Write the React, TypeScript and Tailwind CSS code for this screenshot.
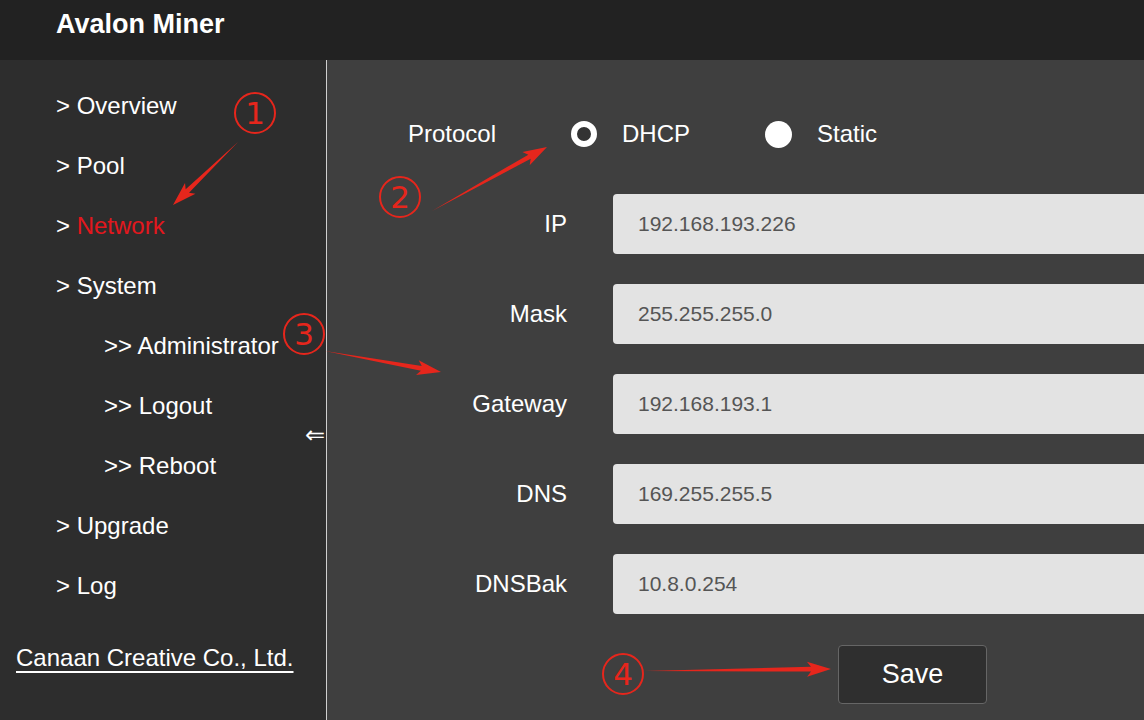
import React from 'react';

const font = { fontFamily: '"Liberation Sans", Arial, sans-serif' };

const navItems = [
  { label: '> Overview', sub: false },
  { label: '> Pool', sub: false },
  { label: 'Network', sub: false, active: true },
  { label: '> System', sub: false },
  { label: '>> Administrator', sub: true },
  { label: '>> Logout', sub: true },
  { label: '>> Reboot', sub: true },
  { label: '> Upgrade', sub: false },
  { label: '> Log', sub: false },
];

const fields = [
  { label: 'IP', value: '192.168.193.226' },
  { label: 'Mask', value: '255.255.255.0' },
  { label: 'Gateway', value: '192.168.193.1' },
  { label: 'DNS', value: '169.255.255.5' },
  { label: 'DNSBak', value: '10.8.0.254' },
];

const RED = '#e6261c';

// tapered red arrow, thin at the tail and wide at the head
function arrowPoints(x1: number, y1: number, x2: number, y2: number) {
  const dx = x2 - x1;
  const dy = y2 - y1;
  const len = Math.sqrt(dx * dx + dy * dy);
  const ux = dx / len;
  const uy = dy / len;
  const nx = -uy;
  const ny = ux;
  const headLen = 20;
  const headW = 7.5;
  const shaftW = 2.4;
  const bx = x2 - ux * headLen;
  const by = y2 - uy * headLen;
  const wx = bx - ux * 4;
  const wy = by - uy * 4;
  const pts = [
    [x1, y1],
    [bx + nx * shaftW, by + ny * shaftW],
    [wx + nx * headW, wy + ny * headW],
    [x2, y2],
    [wx - nx * headW, wy - ny * headW],
    [bx - nx * shaftW, by - ny * shaftW],
  ];
  return pts.map((p) => p.join(',')).join(' ');
}

const marks = [
  { n: '1', cx: 255, cy: 113, arrow: [238, 142, 173, 205] },
  { n: '2', cx: 400, cy: 197, arrow: [432, 211, 547, 147] },
  { n: '3', cx: 304, cy: 334, arrow: [325, 351, 441, 372] },
  { n: '4', cx: 623, cy: 674, arrow: [644, 671, 831, 669] },
];

const Annotations = () => (
  <svg
    className="absolute left-0 top-0 pointer-events-none"
    width={1144}
    height={720}
    viewBox="0 0 1144 720"
  >
    {marks.map((m) => (
      <g key={m.n}>
        <circle cx={m.cx} cy={m.cy} r={20} fill="none" stroke={RED} strokeWidth={2} />
        <text
          x={m.cx}
          y={m.cy + 11}
          textAnchor="middle"
          fontSize={31}
          fill={RED}
          fontFamily='"DejaVu Sans", sans-serif'
        >
          {m.n}
        </text>
        <polygon
          points={arrowPoints(m.arrow[0], m.arrow[1], m.arrow[2], m.arrow[3])}
          fill={RED}
        />
      </g>
    ))}
  </svg>
);

export default function App() {
  return (
    <div className="relative w-[1144px] h-[720px] overflow-hidden text-white" style={font}>
      <header className="h-[60px] bg-[#222222] pl-[56px] pt-[6px]">
        <h1 className="text-[27px] font-bold leading-[36px]">Avalon Miner</h1>
      </header>

      <div className="flex h-[660px]">
        <aside className="relative w-[327px] shrink-0 bg-[#2d2d2d] border-r border-[#d0d0d0] pt-[16px]">
          <ul>
            {navItems.map((item) => (
              <li
                key={item.label}
                className={`h-[60px] flex items-center text-[24px] ${item.sub ? 'pl-[104px]' : 'pl-[56px]'}`}
              >
                {item.active ? (
                  <span>
                    &gt; <span className="text-[#e3171d]">{item.label}</span>
                  </span>
                ) : (
                  item.label
                )}
              </li>
            ))}
          </ul>
          <div className="mt-[12px] h-[60px] flex items-center pl-[16px] text-[24px]">
            <span className="underline underline-offset-[5px] decoration-[2px]">
              Canaan Creative Co., Ltd.
            </span>
          </div>
          <span className="absolute right-[1px] top-[360px] text-[24px] leading-[30px]">⇐</span>
        </aside>

        <main className="flex-1 bg-[#3f3f3f] pt-[44px]">
          <div className="h-[60px] flex items-center text-[24px] pl-[81px]">
            <span className="w-[163px]">Protocol</span>
            <div className="w-[194px] flex items-center">
              <span className="w-[26px] h-[26px] rounded-full border-[6px] border-white bg-[#333]" />
              <span className="ml-[25px]">DHCP</span>
            </div>
            <span className="w-[27px] h-[27px] rounded-full bg-white" />
            <span className="ml-[25px]">Static</span>
          </div>

          <div className="mt-[30px] flex flex-col gap-[30px]">
            {fields.map((f) => (
              <div key={f.label} className="flex items-center h-[60px] gap-[46px]">
                <label className="w-[240px] text-right text-[24px]">{f.label}</label>
                <div className="w-[560px] h-[60px] rounded-[4px] bg-[#e3e3e3] pl-[25px] flex items-center text-[21px] text-[#555]">
                  {f.value}
                </div>
              </div>
            ))}
          </div>

          <div className="mt-[31px] pl-[511px]">
            <button className="w-[149px] h-[59px] rounded-[4px] bg-[#2f2f2f] border border-[#666] text-[27px] text-white">
              Save
            </button>
          </div>
        </main>
      </div>

      <Annotations />
    </div>
  );
}
